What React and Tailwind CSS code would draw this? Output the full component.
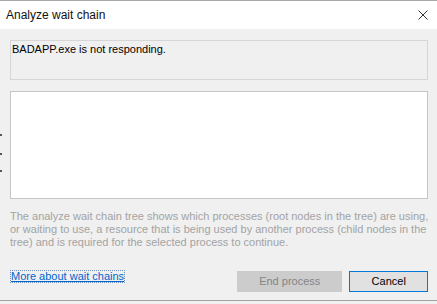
import React from 'react';

const App = () => {
  return (
    <div className="w-[437px] h-[304px] flex flex-col bg-[#f0f0f0] overflow-hidden" style={{ fontFamily: '"Liberation Sans", Arial, sans-serif' }}>
      <div className="h-px bg-[#a9a9a9]" />
      <div className="flex flex-1">
        <div className="w-[2px] bg-[#a5a5a5] relative">
          <span className="absolute left-0 top-[133px] w-[2px] h-[2px] bg-[#555]" />
          <span className="absolute left-0 top-[152px] w-[2px] h-[2px] bg-[#555]" />
          <span className="absolute left-0 top-[169px] w-[2px] h-[2px] bg-[#555]" />
        </div>
        <div className="flex-1 flex flex-col">
          <div className="h-[28px] bg-white flex items-center justify-between pl-[6px] pr-[8px]">
            <span className="text-[12px] text-[#111]">Analyze wait chain</span>
            <svg width="10" height="10" viewBox="0 0 10 10" className="mr-[1px]">
              <path d="M0.5 0.5 L9.5 9.5 M9.5 0.5 L0.5 9.5" stroke="#333" strokeWidth="1" fill="none" />
            </svg>
          </div>
          <div className="flex-1 flex flex-col pl-[10px] pr-[9px] pt-[11px]">
            <div className="h-[40px] border border-[#d6d6d6] pl-px pt-px text-[11px] leading-[14px] text-black">
              BADAPP.exe is not responding.
            </div>
            <div className="mt-[11px] h-[108px] bg-white border border-[#c6c6c6]" />
            <div className="mt-[11px] text-[11px] leading-[13px] text-[#a3a3a3] whitespace-nowrap">
              <div>The analyze wait chain tree shows which processes (root nodes in the tree) are using,</div>
              <div>or waiting to use, a resource that is being used by another process (child nodes in the</div>
              <div>tree) and is required for the selected process to continue.</div>
            </div>
            <div className="mt-[22px] flex items-start justify-between">
              <a className="mt-[-1px] border border-dotted border-[#6d8fbf] text-[11px] leading-[11px] text-[#0066cc] underline" href="#">
                More about wait chains
              </a>
              <div className="flex gap-[7px]">
                <button className="w-[105px] h-[21px] bg-[#cccccc] text-[11px] text-[#858585]">End process</button>
                <button className="w-[79px] h-[21px] bg-[#e1e1e1] border border-[#0078d7] text-[11px] text-black">Cancel</button>
              </div>
            </div>
          </div>
        </div>
      </div>
      <div className="h-px bg-[#a0a0a0] mb-[3px]" />
    </div>
  );
};

export default App;
